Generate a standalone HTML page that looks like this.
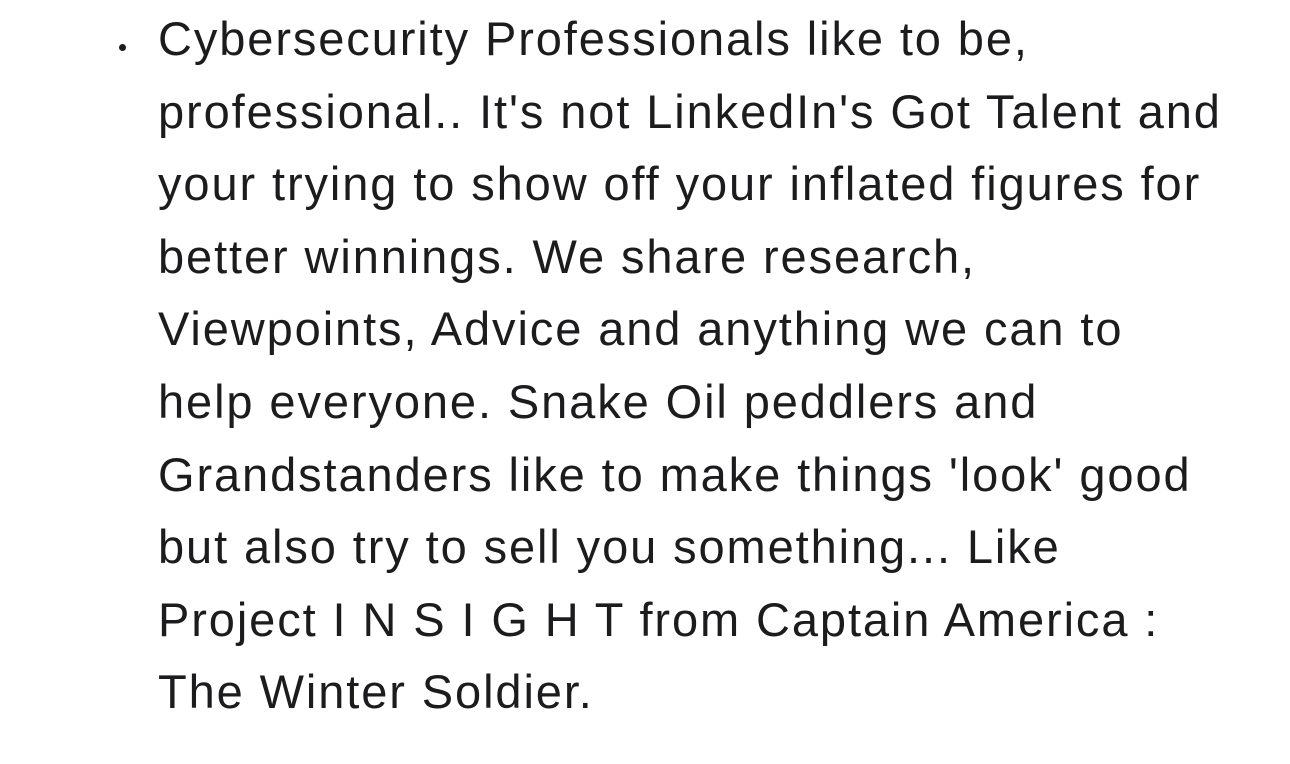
<!DOCTYPE html>
<html><head><meta charset="utf-8"><style>
html,body{margin:0;padding:0;background:#fff;width:1290px;height:764px;overflow:hidden}
.t{position:absolute;left:158px;top:3px;font-family:"Liberation Sans",sans-serif;font-size:47px;letter-spacing:1.9px;line-height:72.6px;color:#1c1c1e;white-space:nowrap}
.b{position:absolute;left:119px;top:44px;width:7px;height:7px;border-radius:50%;background:#1c1c1e}
</style></head><body>
<div class="b"></div>
<div class="t">
<div>Cybersecurity Professionals like to be,</div>
<div>professional.. It's not LinkedIn's Got Talent and</div>
<div>your trying to show off your inflated figures for</div>
<div>better winnings. We share research,</div>
<div>Viewpoints, Advice and anything we can to</div>
<div>help everyone. Snake Oil peddlers and</div>
<div>Grandstanders like to make things 'look' good</div>
<div>but also try to sell you something... Like</div>
<div>Project I N S I G H T from Captain America :</div>
<div>The Winter Soldier.</div>
</div>
</body></html>
